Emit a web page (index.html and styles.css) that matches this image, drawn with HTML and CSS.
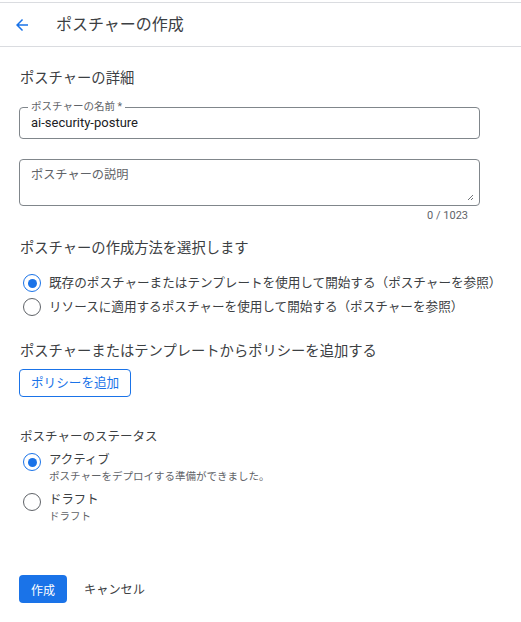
FILE: index.html
```html
<!DOCTYPE html>
<html lang="ja">
<head>
<meta charset="utf-8">
<title>ポスチャーの作成</title>
<link rel="stylesheet" href="styles.css">
</head>
<body>
<header class="topbar">
  <button class="back" aria-label="戻る">
    <svg viewBox="0 0 24 24" width="18" height="18"><path d="M20 11H7.83l5.59-5.59L12 4l-8 8 8 8 1.41-1.41L7.83 13H20v-2z" fill="#1a73e8"/></svg>
  </button>
  <h1 class="page-title">ポスチャーの作成</h1>
</header>
<main class="content">
  <h2 class="section-title first">ポスチャーの詳細</h2>

  <div class="field name-field">
    <span class="float-label">ポスチャーの名前 *</span>
    <span class="field-value">ai-security-posture</span>
  </div>

  <div class="field desc-field">
    <span class="placeholder">ポスチャーの説明</span>
    <svg class="resize" viewBox="0 0 8 8" width="8" height="8"><path d="M7 2L2 7M7 5L5 7" stroke="#5f6368" stroke-width="0.9" fill="none"/></svg>
  </div>
  <div class="counter">0 / 1023</div>

  <h2 class="section-title method-title">ポスチャーの作成方法を選択します</h2>
  <div class="radio-list">
    <div class="radio-row"><span class="radio checked"></span><span class="radio-text">既存のポスチャーまたはテンプレートを使用して開始する（ポスチャーを参照）</span></div>
    <div class="radio-row"><span class="radio"></span><span class="radio-text">リソースに適用するポスチャーを使用して開始する（ポスチャーを参照）</span></div>
  </div>

  <h2 class="section-title policy-title">ポスチャーまたはテンプレートからポリシーを追加する</h2>
  <button class="outline-btn">ポリシーを追加</button>

  <div class="status-label">ポスチャーのステータス</div>
  <div class="status-list">
    <div class="status-row">
      <span class="radio checked"></span>
      <div class="status-text">
        <div class="status-name">アクティブ</div>
        <div class="status-desc">ポスチャーをデプロイする準備ができました。</div>
      </div>
    </div>
    <div class="status-row">
      <span class="radio"></span>
      <div class="status-text">
        <div class="status-name">ドラフト</div>
        <div class="status-desc">ドラフト</div>
      </div>
    </div>
  </div>

  <div class="actions">
    <button class="primary-btn">作成</button>
    <button class="text-btn">キャンセル</button>
  </div>
</main>
</body>
</html>
```

FILE: styles.css
```css
* { box-sizing: border-box; }

body {
  margin: 0;
  background: #fff;
  font-family: "Roboto", "Noto Sans CJK JP", sans-serif;
  color: #202124;
}

.topbar {
  margin-top: 2px;
  height: 45px;
  border-top: 1px solid #dadce0;
  border-bottom: 1px solid #dadce0;
  display: flex;
  align-items: center;
  padding-left: 13px;
}

.back {
  border: 0;
  background: none;
  padding: 0;
  width: 18px;
  height: 18px;
  display: flex;
  cursor: pointer;
}

.page-title {
  margin: 0 0 0 25px;
  font-size: 16px;
  font-weight: 400;
  line-height: 22px;
  color: #3c4043;
}

.content {
  padding: 0 20px 0 19px;
  width: 480px;
}

.section-title {
  margin: 0;
  font-size: 14.3px;
  font-weight: 400;
  line-height: 20px;
  padding-left: 1px;
  color: #3c4043;
}

.section-title.first { margin-top: 21px; }

.field {
  position: relative;
  border: 1px solid #80868b;
  border-radius: 4px;
  width: 461px;
}

.name-field {
  margin-top: 19px;
  height: 32px;
  display: flex;
  align-items: center;
  padding: 0 11px;
}

.float-label {
  position: absolute;
  left: 8px;
  top: -8px;
  padding: 0 3px;
  background: #fff;
  font-size: 10.5px;
  line-height: 14px;
  color: #5f6368;
}

.field-value {
  font-size: 13px;
  line-height: 18px;
  color: #202124;
}

.desc-field {
  margin-top: 20px;
  height: 47px;
  padding: 7px 11px;
}

.placeholder {
  display: block;
  font-size: 12.2px;
  line-height: 16px;
  color: #5f6368;
}

.resize {
  position: absolute;
  right: 5px;
  bottom: 4px;
}

.counter {
  width: 461px;
  margin-top: 3px;
  padding-right: 12px;
  text-align: right;
  font-size: 11px;
  line-height: 14px;
  color: #5f6368;
}

.method-title { margin-top: 15px; }

.radio-list {
  margin-top: 16px;
  display: flex;
  flex-direction: column;
  gap: 6px;
}

.radio-row {
  display: flex;
  align-items: center;
  height: 18px;
  gap: 8px;
  padding-left: 4px;
}

.radio {
  flex: none;
  width: 18px;
  height: 18px;
  border: 1.5px solid #5f6368;
  border-radius: 50%;
  display: flex;
  align-items: center;
  justify-content: center;
}

.radio.checked { border-color: #1a73e8; }

.radio.checked::after {
  content: "";
  width: 9px;
  height: 9px;
  border-radius: 50%;
  background: #1a73e8;
}

.radio-text {
  font-size: 12.6px;
  line-height: 18px;
  color: #3c4043;
  white-space: nowrap;
}

.policy-title { margin-top: 25px; }

.outline-btn {
  margin-top: 8px;
  height: 28px;
  padding: 0 11px;
  border: 1px solid #1a73e8;
  border-radius: 4px;
  background: #fff;
  color: #1a73e8;
  font-family: inherit;
  font-size: 12.6px;
  line-height: 18px;
  display: block;
}

.status-label {
  margin-top: 32px;
  padding-left: 1px;
  font-size: 12.5px;
  line-height: 16px;
  color: #3c4043;
}

.status-list {
  margin-top: 7px;
  display: flex;
  flex-direction: column;
  gap: 8px;
}

.status-row {
  display: flex;
  align-items: flex-start;
  gap: 8px;
  padding-left: 4px;
}

.status-row .radio { margin-top: 1px; }

.status-name {
  font-size: 12.4px;
  line-height: 16px;
  color: #3c4043;
}

.status-desc {
  margin-top: 2px;
  font-size: 10.5px;
  line-height: 14px;
  color: #5f6368;
}

.actions {
  margin-top: 51px;
  display: flex;
  align-items: center;
  gap: 5px;
}

.primary-btn {
  height: 28px;
  padding: 0 12px;
  border: 0;
  border-radius: 4px;
  background: #1a73e8;
  color: #fff;
  font-family: inherit;
  font-size: 12px;
}

.text-btn {
  height: 28px;
  padding: 0 12px;
  border: 0;
  background: none;
  color: #3c4043;
  font-family: inherit;
  font-size: 12.2px;
}
```
